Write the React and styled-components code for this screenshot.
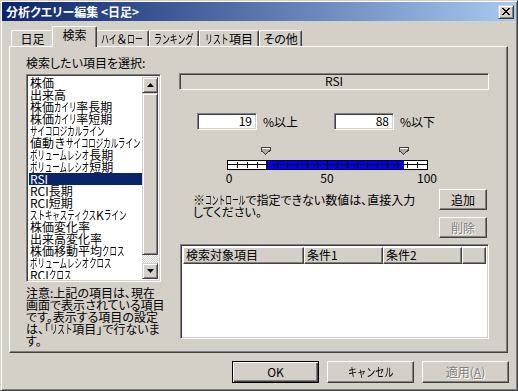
import React from "react";
import styled, { createGlobalStyle, css } from "styled-components";

const GlobalStyle = createGlobalStyle`
  * { box-sizing: border-box; }
  body {
    margin: 0;
    background: #d4d0c8;
    font-family: "Noto Sans CJK JP", "Noto Sans", sans-serif;
    font-size: 12px;
    font-feature-settings: "palt";
    color: #000;
  }
`;

const face = "#d4d0c8";

// classic 3d edges
const raised = css`
  border: 1px solid;
  border-color: #fff #404040 #404040 #fff;
  box-shadow: inset -1px -1px #808080;
  background: ${face};
`;

const raisedSoft = css`
  border: 1px solid;
  border-color: ${face} #404040 #404040 ${face};
  box-shadow: inset 1px 1px #fff, inset -1px -1px #808080;
  background: ${face};
`;

const sunken = css`
  border: 1px solid;
  border-color: #808080 #fff #fff #808080;
  box-shadow: inset 1px 1px #404040, inset -1px -1px ${face};
`;

// the dialog font draws katakana tall and narrow; squeeze full-width runs
const Narrow = styled.span`
  display: inline-block;
  font-feature-settings: normal;
  letter-spacing: 0;
  transform: scaleX(${(p) => p.$s});
  transform-origin: 0 0;
  margin-right: ${(p) => -(1 - p.$s) * 12 * p.$n}px;
`;

const KANA = /([\u30A0-\u30FF]+)/;

function Jp({ text, s = 0.62 }) {
  return text.split(KANA).map((part, i) =>
    i % 2 ? (
      <Narrow key={i} $s={s} $n={part.length}>
        {part}
      </Narrow>
    ) : (
      part
    )
  );
}

const Window = styled.div`
  width: 518px;
  height: 391px;
  background: ${face};
  border: 1px solid;
  border-color: ${face} #404040 #404040 ${face};
  box-shadow: inset 1px 1px #fff, inset -1px -1px #808080;
  padding: 1px;
  display: flex;
  flex-direction: column;
`;

const TitleBar = styled.div`
  height: 19px;
  display: flex;
  align-items: center;
  justify-content: space-between;
  padding: 0 2px 0 4px;
  background: linear-gradient(to right, #0a246a, #a6caf0);
  color: #fff;
  font-weight: bold;
  line-height: 12px;
`;

const CloseButton = styled.div`
  ${raisedSoft};
  width: 16px;
  height: 14px;
  display: flex;
  align-items: center;
  justify-content: center;
`;

const TabRow = styled.div`
  display: flex;
  align-items: flex-end;
  height: 20px;
  margin-top: 5px;
  padding-left: 9px;
  position: relative;
  z-index: 1;
`;

const Tab = styled.div`
  width: ${(p) => p.$w}px;
  height: 16px;
  border-top: 1px solid #fff;
  border-left: 1px solid #fff;
  border-right: 1px solid #404040;
  box-shadow: inset -1px 0 #808080;
  border-top-left-radius: 2px;
  border-top-right-radius: 2px;
  background: ${face};
  display: flex;
  align-items: center;
  justify-content: center;
  line-height: 12px;
  white-space: nowrap;
  ${(p) =>
    p.$active &&
    css`
      width: ${p.$w + 4}px;
      height: 21px;
      margin: 0 -2px -1px;
      padding-bottom: 4px;
      position: relative;
      z-index: 2;
    `}
`;

const Panel = styled.div`
  margin-left: 7px;
  width: 499px;
  height: 307px;
  border: 1px solid;
  border-color: #fff #404040 #404040 #fff;
  box-shadow: inset -1px -1px #808080;
  display: flex;
  gap: 18px;
  padding: 10px 0 0 16px;
`;

const LeftCol = styled.div`
  width: 135px;
  display: flex;
  flex-direction: column;
`;

const Label = styled.div`
  line-height: 12px;
  height: 12px;
  white-space: nowrap;
`;

const ListBox = styled.div`
  ${sunken};
  margin-top: 5px;
  height: 208px;
  padding: 2px;
  background: #fff;
  display: flex;
`;

const Items = styled.div`
  flex: 1;
  overflow: hidden;
`;

const Item = styled.div`
  height: 12px;
  line-height: 12px;
  padding-left: 1px;
  white-space: nowrap;
  font-feature-settings: normal;
  ${(p) =>
    p.$selected &&
    css`
      background: #0a246a;
      color: #fff;
    `}
`;

const ScrollBar = styled.div`
  width: 16px;
  display: flex;
  flex-direction: column;
`;

const ScrollButton = styled.div`
  ${raisedSoft};
  height: 16px;
  flex: none;
  display: flex;
  align-items: center;
  justify-content: center;
`;

const ScrollThumb = styled.div`
  ${raisedSoft};
  height: 162px;
  flex: none;
`;

const ScrollTrack = styled.div`
  flex: 1;
  background: repeating-conic-gradient(#fff 0 25%, ${face} 0 50%) 0 0 / 2px 2px;
`;

const Note = styled.div`
  margin-top: 5px;
  line-height: 12px;
  white-space: nowrap;
`;

const RightCol = styled.div`
  width: 310px;
  display: flex;
  flex-direction: column;
`;

const ItemName = styled.div`
  ${sunken};
  margin-top: 16px;
  height: 17px;
  line-height: 13px;
  text-align: center;
`;

const RangeRow = styled.div`
  margin-top: 23px;
  padding-left: 18px;
  display: flex;
  align-items: center;
`;

const NumberBox = styled.div`
  ${sunken};
  width: 60px;
  height: 17px;
  background: #fff;
  text-align: right;
  padding-right: 4px;
  line-height: 14px;
`;

const Unit = styled.div`
  width: ${(p) => p.$w}px;
  margin-left: 6px;
  line-height: 12px;
`;

const SliderWrap = styled.div`
  margin-top: 17px;
  padding-left: 43px;
  display: flex;
  flex-direction: column;
`;

const Scale = styled.div`
  position: relative;
  width: 200px;
  height: 12px;
  margin: 2px 0 0 5px;
  line-height: 12px;
`;

const ScaleLabel = styled.span`
  position: absolute;
  top: 0;
  transform: translateX(-50%);
`;

const NoteRow = styled.div`
  margin-top: 5px;
  display: flex;
  justify-content: space-between;
`;

const Hint = styled.div`
  padding: 5px 0 0 14px;
  line-height: 12px;
  white-space: nowrap;
`;

const SideButtons = styled.div`
  display: flex;
  flex-direction: column;
  gap: 7px;
  margin-right: 2px;
`;

const Button = styled.div`
  ${raised};
  width: ${(p) => p.$w}px;
  height: ${(p) => p.$h}px;
  display: flex;
  align-items: center;
  justify-content: center;
  line-height: 12px;
  white-space: nowrap;
  ${(p) =>
    p.$default &&
    css`
      border: 1px solid #000;
      box-shadow: inset 1px 1px #fff, inset -1px -1px #404040,
        inset -2px -2px #808080;
    `}
  ${(p) =>
    p.$disabled &&
    css`
      color: #808080;
      text-shadow: 1px 1px 0 #fff;
    `}
`;

const ListView = styled.div`
  ${sunken};
  margin: 6px 0 0 1px;
  width: 309px;
  height: 95px;
  padding: 2px;
  background: #fff;
`;

const HeaderRow = styled.div`
  display: flex;
  height: 17px;
`;

const HeaderCell = styled.div`
  ${raised};
  width: ${(p) => (p.$w ? `${p.$w}px` : "auto")};
  flex: ${(p) => (p.$w ? "none" : 1)};
  padding-left: 2px;
  line-height: 14px;
  white-space: nowrap;
`;

const ButtonRow = styled.div`
  margin-top: 8px;
  padding-right: 7px;
  display: flex;
  justify-content: flex-end;
  gap: 8px;
`;

const tabs = [
  ["日足", 43],
  ["検索", 41],
  ["ハイ＆ロー", 54],
  ["ランキング", 50],
  ["リスト項目", 60],
  ["その他", 43],
];

const items = [
  "株価",
  "出来高",
  "株価カイリ率長期",
  "株価カイリ率短期",
  "サイコロジカルライン",
  "値動きサイコロジカルライン",
  "ボリュームレシオ長期",
  "ボリュームレシオ短期",
  "RSI",
  "RCI長期",
  "RCI短期",
  "ストキャスティクスKライン",
  "株価変化率",
  "出来高変化率",
  "株価移動平均クロス",
  "ボリュームレシオクロス",
  "RCIクロス",
  "ストキャスティクスクロス",
];

function Arrow({ down }) {
  return (
    <svg width="7" height="4" viewBox="0 0 7 4">
      <polygon
        points={down ? "0,0 7,0 3.5,4" : "3.5,0 7,4 0,4"}
        fill="#000"
      />
    </svg>
  );
}

function RangeSlider({ from, to }) {
  const x = (v) => 5 + v * 2;
  const ticks = [];
  for (let v = 5; v < 100; v += 5) ticks.push(v);
  const thumb = (v) => {
    const c = x(v) + 0.5;
    return (
      <g key={v}>
        <polygon
          points={`${c - 4.5},0.5 ${c + 4.5},0.5 ${c + 4.5},3.5 ${c},7.5 ${c - 4.5},3.5`}
          fill="#a8a8a8"
          stroke="#404040"
        />
        <line x1={c - 4} y1="1.5" x2={c + 4} y2="1.5" stroke="#fff" />
      </g>
    );
  };
  return (
    <svg width="212" height="23" shapeRendering="crispEdges">
      <rect x="5.5" y="13.5" width="200" height="9" fill="#fff" stroke="#000" />
      <rect x={x(from) + 1} y="14" width={x(to) - x(from)} height="8" fill="#0000ff" />
      <line x1="6" y1="17.5" x2="205" y2="17.5" stroke="#000" />
      {ticks.map((v) => (
        <line
          key={v}
          x1={x(v) + 0.5}
          x2={x(v) + 0.5}
          y1={v === 50 ? 14 : 15}
          y2={v === 50 ? 22 : 21}
          stroke="#000"
        />
      ))}
      {thumb(from)}
      {thumb(to)}
    </svg>
  );
}

export default function App() {
  const low = 19;
  const high = 88;

  return (
    <>
      <GlobalStyle />
      <Window>
        <TitleBar>
          <span>分析クエリー編集 &lt;日足&gt;</span>
          <CloseButton>
            <svg width="8" height="7" viewBox="0 0 8 7" shapeRendering="crispEdges">
              <path
                d="M0 0h2v1h1v1h2V1h1V0h2v1H7v1H6v1H5v1h1v1h1v1h1v1H6V6H5V5H3v1H2v1H0V6h1V5h1V4h1V3H2V2H1V1H0z"
                fill="#000"
              />
            </svg>
          </CloseButton>
        </TitleBar>

        <TabRow>
          {tabs.map(([name, w], i) => (
            <Tab key={name} $w={w} $active={i === 1}>
              <Jp text={name} s={0.66} />
            </Tab>
          ))}
        </TabRow>

        <Panel>
          <LeftCol>
            <Label>検索したい項目を選択:</Label>
            <ListBox>
              <Items>
                {items.map((it) => (
                  <Item key={it} $selected={it === "RSI"}>
                    <Jp text={it} />
                  </Item>
                ))}
              </Items>
              <ScrollBar>
                <ScrollButton>
                  <Arrow />
                </ScrollButton>
                <ScrollThumb />
                <ScrollTrack />
                <ScrollButton>
                  <Arrow down />
                </ScrollButton>
              </ScrollBar>
            </ListBox>
            <Note>
              注意:上記の項目は、現在
              <br />
              画面で表示されている項目
              <br />
              です。表示する項目の設定
              <br />
              は、「<Jp text="リスト" />項目」で行ないま
              <br />
              す。
            </Note>
          </LeftCol>

          <RightCol>
            <ItemName>RSI</ItemName>
            <RangeRow>
              <NumberBox>{low}</NumberBox>
              <Unit $w={71}>%以上</Unit>
              <NumberBox>{high}</NumberBox>
              <Unit $w={40}>%以下</Unit>
            </RangeRow>
            <SliderWrap>
              <RangeSlider from={low} to={high} />
              <Scale>
                <ScaleLabel style={{ left: "2px" }}>0</ScaleLabel>
                <ScaleLabel style={{ left: "50%" }}>50</ScaleLabel>
                <ScaleLabel style={{ left: "100%" }}>100</ScaleLabel>
              </Scale>
            </SliderWrap>
            <NoteRow>
              <Hint>
                ※<Jp text="コントロール" s={0.56} />で指定できない数値は、直接入力
                <br />
                してください。
              </Hint>
              <SideButtons>
                <Button $w={48} $h={21}>追加</Button>
                <Button $w={48} $h={21} $disabled>削除</Button>
              </SideButtons>
            </NoteRow>
            <ListView>
              <HeaderRow>
                <HeaderCell $w={121}>検索対象項目</HeaderCell>
                <HeaderCell $w={79}>条件1</HeaderCell>
                <HeaderCell $w={79}>条件2</HeaderCell>
                <HeaderCell />
              </HeaderRow>
            </ListView>
          </RightCol>
        </Panel>

        <ButtonRow>
          <Button $w={87} $h={22} $default>OK</Button>
          <Button $w={87} $h={22}>
            <Jp text="キャンセル" s={0.76} />
          </Button>
          <Button $w={87} $h={22} $disabled>
            適用(<u>A</u>)
          </Button>
        </ButtonRow>
      </Window>
    </>
  );
}
